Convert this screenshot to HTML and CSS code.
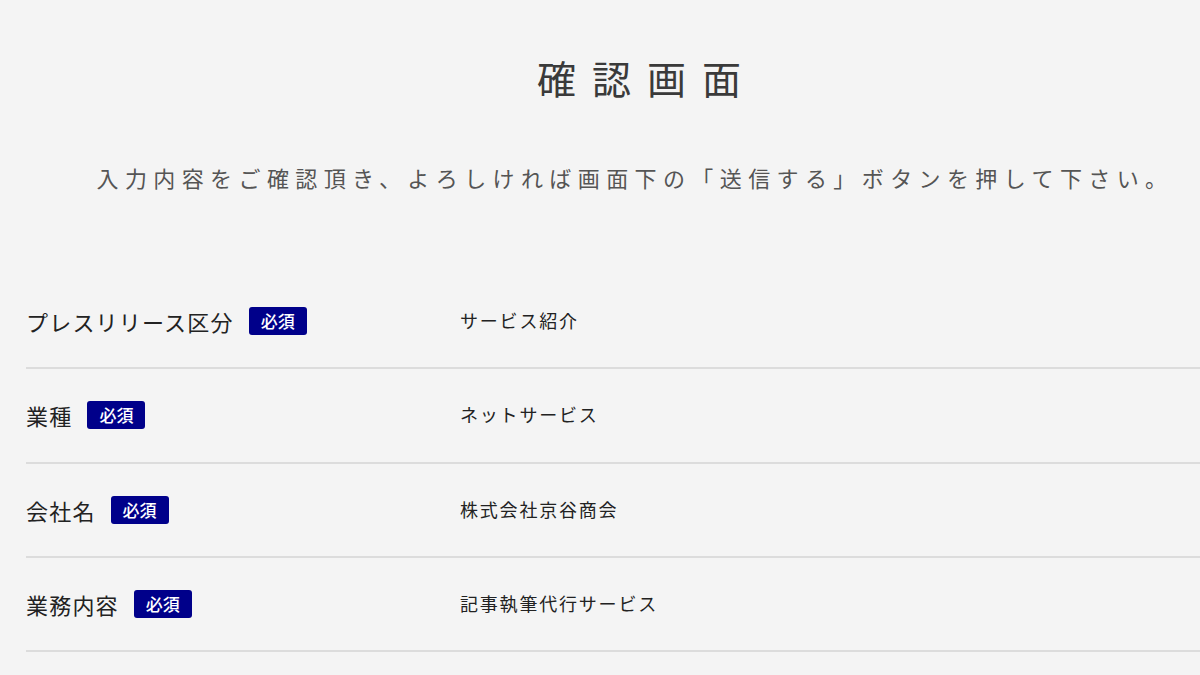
FILE: index.html
```html
<!DOCTYPE html>
<html lang="ja">
<head>
<meta charset="utf-8">
<title>確認画面</title>
<link rel="stylesheet" href="styles.css">
</head>
<body>
<main class="page">
  <h1 class="title">確認画面</h1>
  <p class="lead">入力内容をご確認頂き、よろしければ画面下の「送信する」ボタンを押して下さい。</p>
  <div class="rows">
    <div class="row">
      <div class="label">プレスリリース区分<span class="badge">必須</span></div>
      <div class="value">サービス紹介</div>
    </div>
    <div class="row">
      <div class="label">業種<span class="badge">必須</span></div>
      <div class="value">ネットサービス</div>
    </div>
    <div class="row">
      <div class="label">会社名<span class="badge">必須</span></div>
      <div class="value">株式会社京谷商会</div>
    </div>
    <div class="row">
      <div class="label">業務内容<span class="badge">必須</span></div>
      <div class="value">記事執筆代行サービス</div>
    </div>
  </div>
</main>
</body>
</html>
```

FILE: styles.css
```css
html, body {
  margin: 0;
  padding: 0;
  background: #f4f4f4;
  overflow: hidden;
}

body {
  font-family: "Noto Sans CJK JP", "Noto Sans", sans-serif;
  color: #222;
}

.page {
  width: 1228px;
  margin-left: 26px;
  padding-top: 57px;
}

.title {
  margin: 0;
  font-size: 39px;
  line-height: 40px;
  font-weight: 400;
  letter-spacing: 16px;
  color: #3a3a3a;
  text-align: center;
  padding-left: 14px;
}

.lead {
  margin: 69px 0 0;
  font-size: 22px;
  line-height: 22px;
  letter-spacing: 6.4px;
  color: #555;
  text-align: center;
  padding-right: 10px;
}

.rows {
  margin-top: 87px;
}

.row {
  display: grid;
  grid-template-columns: 434px 1fr;
  align-items: center;
  padding: 32px 0 32.3px;
  border-bottom: 2px solid #dcdcdc;
}

.label {
  display: flex;
  align-items: center;
  font-size: 22px;
  line-height: 28px;
  letter-spacing: 1.2px;
  color: #222;
}

.badge {
  margin-left: 15px;
  height: 28px;
  padding: 0 12px;
  box-sizing: border-box;
  display: inline-flex;
  align-items: center;
  background: #00008a;
  color: #fff;
  font-size: 17px;
  font-weight: 500;
  letter-spacing: 0;
  border-radius: 3px;
}

.value {
  font-size: 18px;
  line-height: 28px;
  letter-spacing: 1.8px;
  color: #222;
  margin-top: -2px;
}
```
